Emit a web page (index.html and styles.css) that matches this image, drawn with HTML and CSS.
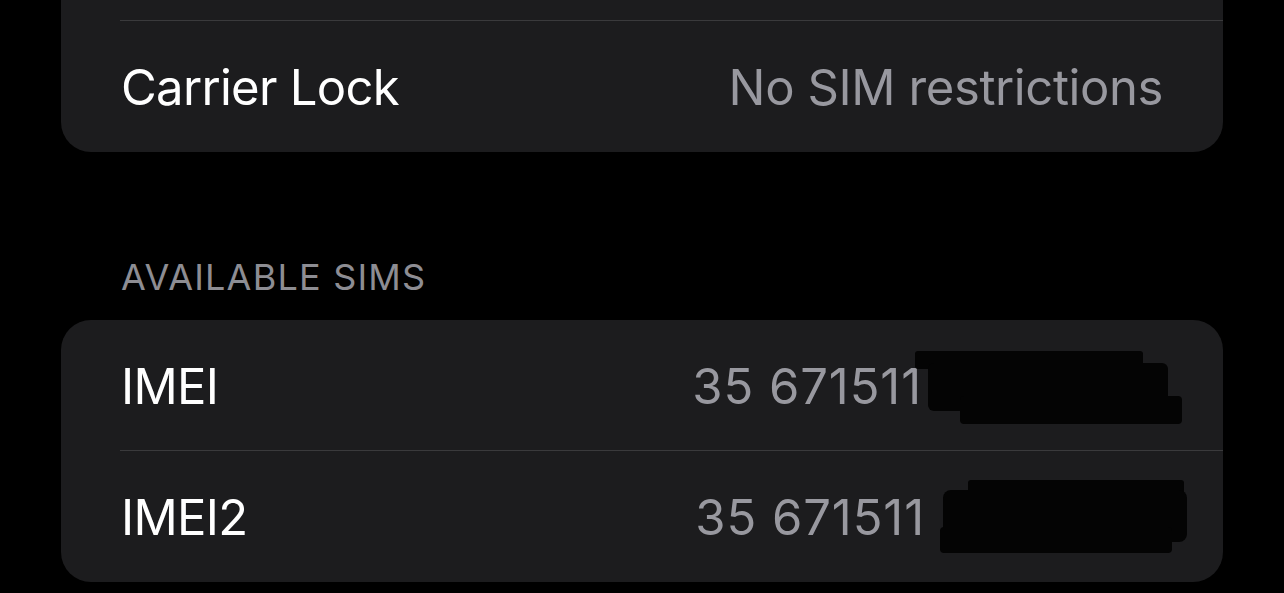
FILE: index.html
```html
<!DOCTYPE html>
<html lang="en">
<head>
<meta charset="utf-8">
<title>About</title>
<link rel="stylesheet" href="styles.css">
</head>
<body>
<main class="page">
  <section class="card card-top">
    <div class="row-stub"></div>
    <div class="row">
      <span class="label">Carrier Lock</span>
      <span class="value">No SIM restrictions</span>
    </div>
  </section>

  <h2 class="section-header">AVAILABLE SIMS</h2>

  <section class="card">
    <div class="row row-divided">
      <span class="label">IMEI</span>
      <span class="value value-imei value-imei1">35 671511<svg class="redact redact-1" width="270" height="78" viewBox="0 0 270 78" aria-hidden="true"><rect x="0" y="2" width="228" height="18" rx="3"/><rect x="13" y="14" width="240" height="48" rx="6"/><rect x="45" y="47" width="222" height="28" rx="4"/></svg></span>
    </div>
    <div class="row">
      <span class="label">IMEI2</span>
      <span class="value value-imei value-imei2">35 671511<svg class="redact redact-2" width="252" height="76" viewBox="0 0 252 76" aria-hidden="true"><rect x="30" y="2" width="216" height="44" rx="3"/><rect x="5" y="12" width="244" height="52" rx="8"/><rect x="2" y="49" width="232" height="26" rx="4"/></svg></span>
    </div>
  </section>
</main>
</body>
</html>
```

FILE: styles.css
```css
html, body {
  margin: 0;
  padding: 0;
  background: #000;
}

body {
  font-family: Inter, "Noto Sans", "Liberation Sans", sans-serif;
  color: #fff;
  -webkit-font-smoothing: antialiased;
}

.page {
  width: 1284px;
  height: 593px;
  overflow: hidden;
  padding: 0 61px;
  box-sizing: border-box;
}

.card {
  background: #1c1c1e;
  border-radius: 30px;
  overflow: hidden;
}

.card-top {
  border-top-left-radius: 0;
  border-top-right-radius: 0;
}

.row-stub {
  height: 20px;
  margin-left: 59px;
  border-bottom: 1px solid #3a3a3c;
}

.row {
  position: relative;
  display: flex;
  align-items: center;
  justify-content: space-between;
  height: 131px;
  padding: 2px 60px 0 60px;
  box-sizing: border-box;
}

.row-divided::after {
  content: "";
  position: absolute;
  left: 59px;
  right: 0;
  bottom: 0;
  height: 1px;
  background: #3a3a3c;
}

.label {
  font-size: 49px;
  letter-spacing: -0.7px;
  color: #fff;
}

.value {
  font-size: 49px;
  letter-spacing: -0.4px;
  color: #98989f;
}

.value-imei {
  display: inline-flex;
  align-items: center;
  letter-spacing: 0.9px;
}

.value-imei1 {
  margin-right: -22px;
}

.value-imei2 {
  margin-right: -27px;
}

.redact {
  display: block;
  flex: none;
  fill: #040404;
}

.redact-1 {
  margin-left: -7px;
  margin-top: 2px;
}

.redact-2 {
  margin-left: 13px;
  margin-top: -4px;
}

.section-header {
  margin: 103px 0 0 0;
  padding: 0 60px;
  height: 65px;
  font-size: 36px;
  font-weight: 400;
  letter-spacing: 1.2px;
  color: #8d8d93;
  line-height: 44px;
}
```
